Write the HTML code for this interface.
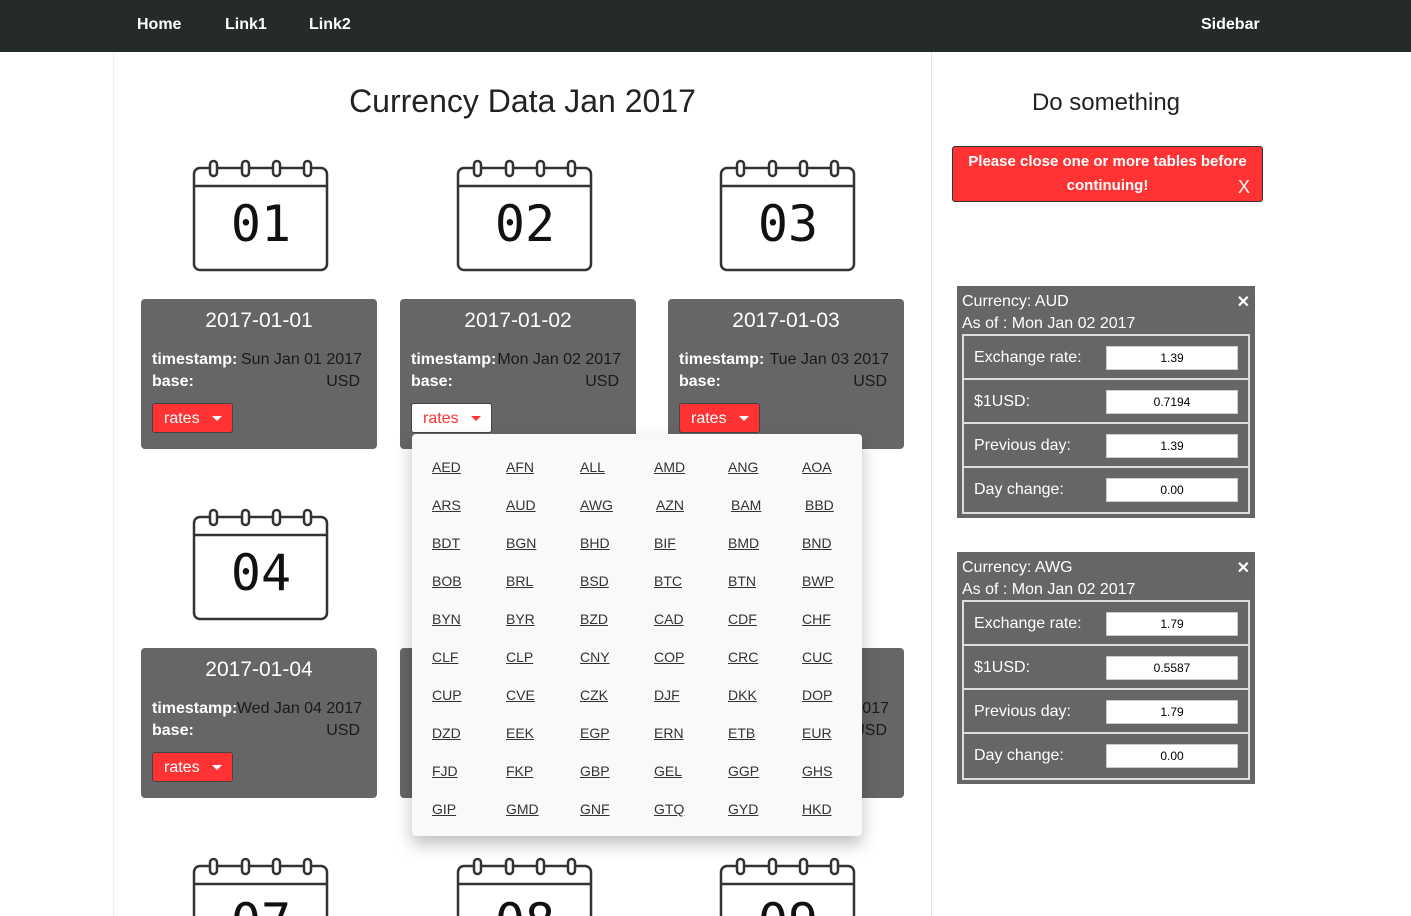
<!DOCTYPE html>
<html style="width:1411px;height:916px;overflow:hidden"><head><meta charset="utf-8"><style>
*{margin:0;padding:0;box-sizing:border-box}
body{width:1411px;height:916px;overflow:hidden;position:relative;background:#fff;font-family:"Liberation Sans",sans-serif;color:#222}
.nav{position:absolute;left:0;top:0;width:1411px;height:52px;background:#252a2b}
.nav span{position:absolute;top:16px;color:#fff;font-weight:bold;font-size:16px}
.main{position:absolute;left:113px;top:52px;width:819px;height:864px;border-left:1px solid #eee;border-right:1px solid #e6e6e6}
.abs{position:absolute}
.cal{position:absolute;width:140px;height:115px}
.card{position:absolute;width:236px;height:150px;background:#666;border-radius:4px}
.card .t{position:absolute;top:10px;left:0;width:100%;text-align:center;color:#fff;font-size:21px}
.card .l{position:absolute;left:11px;color:#fff;font-weight:bold;font-size:16px}
.card .v{position:absolute;right:15px;color:#1a1a1a;font-size:16px}
.btn{position:absolute;left:11px;top:104px;width:81px;height:30px;background:#f33;border:1px solid #444;border-radius:3px;color:#fff;font-size:16px;padding:6px 0 0 11px}
.btn:after{content:"";position:absolute;left:59px;top:12px;border:5px solid transparent;border-top:5px solid currentColor}
.dd{position:absolute;left:412px;top:434px;width:450px;height:402px;background:#f9f9f9;border-radius:4px;box-shadow:0 8px 16px rgba(0,0,0,.25)}
.dd a{position:absolute;font-size:14px;color:#333;text-decoration:underline}
.tbl{position:absolute;left:957px;width:298px;height:232px;background:#666;color:#fff}
.tbl .h{position:absolute;left:5px;font-size:16px}
.tbl .x{position:absolute;right:5px;top:6px;font-size:16px;font-weight:bold}
.tbl .in{position:absolute;left:5px;top:48px;width:288px;height:180px;border:2px solid #ddd}
.tbl .r{position:absolute;left:0;width:284px;height:44px;border-bottom:2px solid #ddd;font-size:16px}
.tbl .r:last-child{border-bottom:none}
.tbl .r span{position:absolute;left:10px;top:13px}
.tbl .r b{position:absolute;left:142px;top:10px;width:132px;height:24px;background:#fff;border:1px solid #ccc;color:#000;font-weight:normal;font-size:12px;text-align:center;line-height:23px}
</style></head><body>
<div class="nav"><span style="left:137px">Home</span><span style="left:225px">Link1</span><span style="left:309px">Link2</span><span style="left:1201px">Sidebar</span></div>
<div class="main"></div>
<div class="abs" style="left:113px;top:83px;width:819px;text-align:center;font-size:32px;color:#222">Currency Data Jan 2017</div>
<div class="abs" style="left:932px;top:89px;width:348px;text-align:center;font-size:24px;color:#222">Do something</div>
<div class="abs" style="left:952px;top:146px;width:311px;height:56px;background:#f33;border:1px solid #333;border-radius:3px;color:#fff;font-weight:bold;font-size:15px;text-align:center;line-height:24px;padding-top:3px">Please close one or more tables before<br>continuing!<span style="position:absolute;right:12px;top:28px;font-size:18px;font-weight:normal">X</span></div>

<svg width="0" height="0" style="position:absolute"><defs><g id="c" fill="none" stroke="#333" stroke-width="2.5"><rect x="4" y="11" width="133" height="102" rx="6" fill="#fff"/><line x1="4" y1="29" x2="137" y2="29"/><rect x="20" y="4" width="7" height="15" rx="3.5" fill="#fff"/><rect x="52" y="4" width="7" height="15" rx="3.5" fill="#fff"/><rect x="83" y="4" width="7" height="15" rx="3.5" fill="#fff"/><rect x="114" y="4" width="7" height="15" rx="3.5" fill="#fff"/></g></defs></svg>
<svg class="cal" style="left:190px;top:157px"><use href="#c"/><text x="71" y="84" text-anchor="middle" font-family="DejaVu Sans Mono,monospace" font-size="50" fill="#111">01</text></svg>
<svg class="cal" style="left:454px;top:157px"><use href="#c"/><text x="71" y="84" text-anchor="middle" font-family="DejaVu Sans Mono,monospace" font-size="50" fill="#111">02</text></svg>
<svg class="cal" style="left:717px;top:157px"><use href="#c"/><text x="71" y="84" text-anchor="middle" font-family="DejaVu Sans Mono,monospace" font-size="50" fill="#111">03</text></svg>
<svg class="cal" style="left:190px;top:506px"><use href="#c"/><text x="71" y="84" text-anchor="middle" font-family="DejaVu Sans Mono,monospace" font-size="50" fill="#111">04</text></svg>
<svg class="cal" style="left:190px;top:855px;height:61px"><use href="#c"/><text x="71" y="84" text-anchor="middle" font-family="DejaVu Sans Mono,monospace" font-size="50" fill="#111">07</text></svg>
<svg class="cal" style="left:454px;top:855px;height:61px"><use href="#c"/><text x="71" y="84" text-anchor="middle" font-family="DejaVu Sans Mono,monospace" font-size="50" fill="#111">08</text></svg>
<svg class="cal" style="left:717px;top:855px;height:61px"><use href="#c"/><text x="71" y="84" text-anchor="middle" font-family="DejaVu Sans Mono,monospace" font-size="50" fill="#111">09</text></svg>

<div class="card" style="left:141px;top:299px"><div class="t">2017-01-01</div><div class="l" style="top:52px">timestamp:</div><div class="v" style="top:52px">Sun Jan 01 2017</div><div class="l" style="top:74px">base:</div><div class="v" style="top:74px;right:17px">USD</div><div class="btn">rates</div></div>
<div class="card" style="left:400px;top:299px"><div class="t">2017-01-02</div><div class="l" style="top:52px">timestamp:</div><div class="v" style="top:52px">Mon Jan 02 2017</div><div class="l" style="top:74px">base:</div><div class="v" style="top:74px;right:17px">USD</div><div class="btn" style="background:#fff;color:#f33">rates</div></div>
<div class="card" style="left:668px;top:299px"><div class="t">2017-01-03</div><div class="l" style="top:52px">timestamp:</div><div class="v" style="top:52px">Tue Jan 03 2017</div><div class="l" style="top:74px">base:</div><div class="v" style="top:74px;right:17px">USD</div><div class="btn">rates</div></div>
<div class="card" style="left:141px;top:648px"><div class="t">2017-01-04</div><div class="l" style="top:52px">timestamp:</div><div class="v" style="top:52px">Wed Jan 04 2017</div><div class="l" style="top:74px">base:</div><div class="v" style="top:74px;right:17px">USD</div><div class="btn">rates</div></div>
<div class="card" style="left:400px;top:648px"></div>
<div class="card" style="left:668px;top:648px"><div class="v" style="top:52px">Thu Jan 05 2017</div><div class="v" style="top:74px;right:17px">USD</div></div>

<div class="dd">
<a style="left:20px;top:25px">AED</a><a style="left:94px;top:25px">AFN</a><a style="left:168px;top:25px">ALL</a><a style="left:242px;top:25px">AMD</a><a style="left:316px;top:25px">ANG</a><a style="left:390px;top:25px">AOA</a>
<a style="left:20px;top:63px">ARS</a><a style="left:94px;top:63px">AUD</a><a style="left:168px;top:63px">AWG</a><a style="left:244px;top:63px">AZN</a><a style="left:319px;top:63px">BAM</a><a style="left:393px;top:63px">BBD</a>
<a style="left:20px;top:101px">BDT</a><a style="left:94px;top:101px">BGN</a><a style="left:168px;top:101px">BHD</a><a style="left:242px;top:101px">BIF</a><a style="left:316px;top:101px">BMD</a><a style="left:390px;top:101px">BND</a>
<a style="left:20px;top:139px">BOB</a><a style="left:94px;top:139px">BRL</a><a style="left:168px;top:139px">BSD</a><a style="left:242px;top:139px">BTC</a><a style="left:316px;top:139px">BTN</a><a style="left:390px;top:139px">BWP</a>
<a style="left:20px;top:177px">BYN</a><a style="left:94px;top:177px">BYR</a><a style="left:168px;top:177px">BZD</a><a style="left:242px;top:177px">CAD</a><a style="left:316px;top:177px">CDF</a><a style="left:390px;top:177px">CHF</a>
<a style="left:20px;top:215px">CLF</a><a style="left:94px;top:215px">CLP</a><a style="left:168px;top:215px">CNY</a><a style="left:242px;top:215px">COP</a><a style="left:316px;top:215px">CRC</a><a style="left:390px;top:215px">CUC</a>
<a style="left:20px;top:253px">CUP</a><a style="left:94px;top:253px">CVE</a><a style="left:168px;top:253px">CZK</a><a style="left:242px;top:253px">DJF</a><a style="left:316px;top:253px">DKK</a><a style="left:390px;top:253px">DOP</a>
<a style="left:20px;top:291px">DZD</a><a style="left:94px;top:291px">EEK</a><a style="left:168px;top:291px">EGP</a><a style="left:242px;top:291px">ERN</a><a style="left:316px;top:291px">ETB</a><a style="left:390px;top:291px">EUR</a>
<a style="left:20px;top:329px">FJD</a><a style="left:94px;top:329px">FKP</a><a style="left:168px;top:329px">GBP</a><a style="left:242px;top:329px">GEL</a><a style="left:316px;top:329px">GGP</a><a style="left:390px;top:329px">GHS</a>
<a style="left:20px;top:367px">GIP</a><a style="left:94px;top:367px">GMD</a><a style="left:168px;top:367px">GNF</a><a style="left:242px;top:367px">GTQ</a><a style="left:316px;top:367px">GYD</a><a style="left:390px;top:367px">HKD</a>
</div>

<div class="tbl" style="top:286px"><div class="h" style="top:7px">Currency: AUD</div><div class="h" style="top:29px">As of : Mon Jan 02 2017</div><div class="x">✕</div>
<div class="in"><div class="r" style="top:0"><span>Exchange rate:</span><b>1.39</b></div><div class="r" style="top:44px"><span>$1USD:</span><b>0.7194</b></div><div class="r" style="top:88px"><span>Previous day:</span><b>1.39</b></div><div class="r" style="top:132px"><span>Day change:</span><b>0.00</b></div></div></div>
<div class="tbl" style="top:552px"><div class="h" style="top:7px">Currency: AWG</div><div class="h" style="top:29px">As of : Mon Jan 02 2017</div><div class="x">✕</div>
<div class="in"><div class="r" style="top:0"><span>Exchange rate:</span><b>1.79</b></div><div class="r" style="top:44px"><span>$1USD:</span><b>0.5587</b></div><div class="r" style="top:88px"><span>Previous day:</span><b>1.79</b></div><div class="r" style="top:132px"><span>Day change:</span><b>0.00</b></div></div></div>
</body></html>
